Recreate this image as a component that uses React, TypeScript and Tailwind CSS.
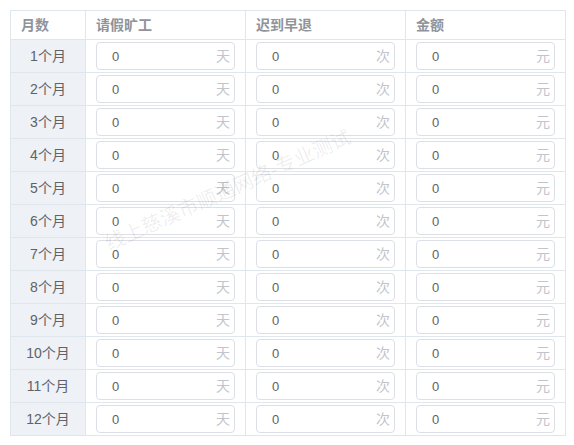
import React from "react";

const months = Array.from({ length: 12 }, (_, i) => `${i + 1}个月`);

function Field({ suffix }: { suffix: string }) {
  return (
    <div className="relative h-[28px] w-full rounded-[4px] border border-[#dcdfe6] bg-white">
      <input
        readOnly
        value="0"
        className="h-full w-full rounded-[4px] bg-transparent pl-[15px] pr-[24px] text-[13px] text-[#606266] outline-none"
        style={{ fontFamily: '"Liberation Sans", Arial, sans-serif' }}
      />
      <span className="absolute right-[4px] top-0 flex h-full items-center text-[14px] text-[#c0c4cc]">
        {suffix}
      </span>
    </div>
  );
}

export default function App() {
  return (
    <div
      className="relative h-[445px] w-[574px] bg-white pl-[10px] pt-[10px]"
      style={{ fontFamily: '"Liberation Sans", Arial, "Noto Sans CJK SC", sans-serif' }}
    >
      <div className="grid w-[556px] grid-cols-[75px_160px_160px_160px] border-l border-t border-[#dfe6ec]">
        {["月数", "请假旷工", "迟到早退", "金额"].map((h) => (
          <div
            key={h}
            className="flex h-[29px] items-center border-b border-r border-[#dfe6ec] pl-[10px] text-[14px] font-bold text-[#909399]"
          >
            {h}
          </div>
        ))}
        {months.map((m) => (
          <React.Fragment key={m}>
            <div className="flex h-[33px] items-center justify-center border-b border-r border-[#dfe6ec] bg-[#eef1f6] text-[14px] text-[#606266]">
              {m}
            </div>
            <div className="flex h-[33px] items-center border-b border-r border-[#dfe6ec] px-[10px]">
              <Field suffix="天" />
            </div>
            <div className="flex h-[33px] items-center border-b border-r border-[#dfe6ec] px-[10px]">
              <Field suffix="次" />
            </div>
            <div className="flex h-[33px] items-center border-b border-r border-[#dfe6ec] px-[10px]">
              <Field suffix="元" />
            </div>
          </React.Fragment>
        ))}
      </div>
      <div className="pointer-events-none absolute left-[228px] top-[190px] -translate-x-1/2 -translate-y-1/2 -rotate-[24deg] whitespace-nowrap text-[20px] text-[rgba(0,0,0,0.08)]">
        线上慈溪市顺通网络-专业测试
      </div>
    </div>
  );
}
